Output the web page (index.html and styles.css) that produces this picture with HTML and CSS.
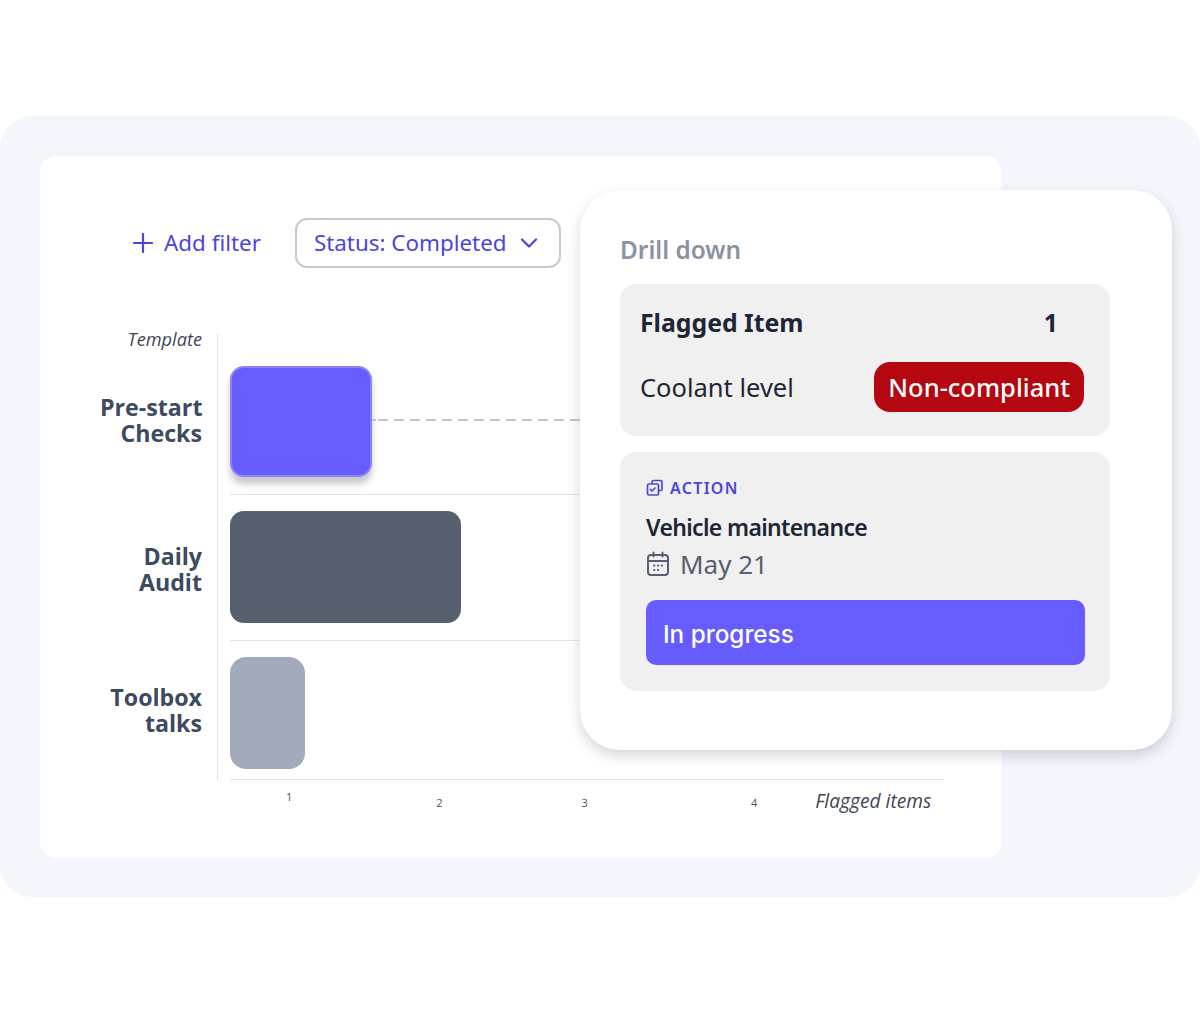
FILE: index.html
```html
<!DOCTYPE html>
<html lang="en">
<head>
    <meta charset="UTF-8">
    <meta name="viewport" content="width=device-width, initial-scale=1.0">
    <title>Flagged items report</title>
    <link rel="stylesheet" href="styles.css">
</head>
<body>
    <div class="panel">
        <div class="report">
            <div class="filters">
                <div class="add-filter">
                    <svg class="plus-icon" width="20" height="20" viewBox="0 0 20 20" fill="none" stroke="currentColor" stroke-width="2.200" stroke-linecap="round"><path d="M10 1v18M1 10h18"/></svg>
                    <span>Add filter</span>
                </div>
                <div class="status-select">
                    <span>Status: Completed</span>
                    <svg width="18" height="10" viewBox="0 0 18 10" fill="none" stroke="currentColor" stroke-width="2.200" stroke-linecap="round" stroke-linejoin="round"><path d="M2 1.500l7 7 7-7"/></svg>
                </div>
            </div>
            <div class="chart">
                <div class="labels">
                    <div class="axis-title">Template</div>
                    <div class="label label-first">Pre-start<br>Checks</div>
                    <div class="label label-second">Daily<br>Audit</div>
                    <div class="label label-third">Toolbox<br>talks</div>
                </div>
                <div class="plot">
                    <div class="row row-first">
                        <div class="bar bar-primary"></div>
                        <div class="dash"></div>
                    </div>
                    <div class="row row-second">
                        <div class="bar bar-dark"></div>
                    </div>
                    <div class="row row-third">
                        <div class="bar bar-light"></div>
                    </div>
                </div>
            </div>
            <div class="ticks">
                <span class="tick tick-1">1</span>
                <span class="tick tick-2">2</span>
                <span class="tick tick-3">3</span>
                <span class="tick tick-4">4</span>
                <span class="axis-title x-title">Flagged items</span>
            </div>
        </div>
        <div class="drill">
            <div class="drill-title">Drill down</div>
            <div class="box flagged">
                <div class="flagged-head">
                    <span>Flagged Item</span>
                    <span class="count">1</span>
                </div>
                <div class="flagged-row">
                    <span>Coolant level</span>
                    <span class="badge">Non-compliant</span>
                </div>
            </div>
            <div class="box action">
                <div class="action-tag">
                    <svg width="18" height="18" viewBox="0 0 18 18" fill="none" stroke="currentColor" stroke-width="1.700" stroke-linecap="round" stroke-linejoin="round"><path d="M6 4V3a1.500 1.500 0 0 1 1.500-1.500h7A1.500 1.500 0 0 1 16 3v7a1.500 1.500 0 0 1-1.500 1.500H13"/><rect x="1.500" y="5" width="11" height="11" rx="1.500"/><path d="M4.500 10.500l1.500 1.500 3-3"/></svg>
                    <span>ACTION</span>
                </div>
                <div class="action-name">Vehicle maintenance</div>
                <div class="action-date">
                    <svg width="24" height="26" viewBox="0 0 24 26" fill="none" stroke="currentColor" stroke-width="2" stroke-linecap="round"><rect x="2" y="4" width="20" height="20" rx="3"/><path d="M2 10h20M7.500 1.500v4M16.500 1.500v4"/><path d="M8 14.500h.5M11.800 14.500h.5M15.600 14.500h.5M8 19h.5M11.800 19h.5" stroke-width="1.800"/></svg>
                    <span>May 21</span>
                </div>
                <div class="progress">In progress</div>
            </div>
        </div>
    </div>
</body>
</html>
```

FILE: styles.css
```css
body {
    margin: 0;
    height: 1016px;
    padding-top: 116px;
    box-sizing: border-box;
    background-color: #fff;
    font-family: 'Noto Sans', sans-serif;
    overflow: hidden;
}
.panel {
    position: relative;
    height: 781px;
    box-sizing: border-box;
    padding: 40px 198px 39px 40px;
    background-color: #f3f6fb;
    border-radius: 32px;
}
.report {
    height: 702px;
    box-sizing: border-box;
    padding: 62px 58px 0 60px;
    background-color: #fff;
    border-radius: 16px;
}
.filters {
    display: flex;
    align-items: center;
    height: 50px;
    color: #4b45dc;
    font-size: 22.400px;
    line-height: 48px;
}
.add-filter {
    display: flex;
    align-items: center;
    gap: 11px;
    margin-left: 33px;
}
.status-select {
    display: flex;
    align-items: center;
    gap: 13px;
    height: 50px;
    width: 266px;
    box-sizing: border-box;
    margin-left: 34px;
    padding: 0 0 0 17px;
    border: 2px solid #c9cacf;
    border-radius: 12px;
}
.chart {
    display: flex;
    margin-top: 66px;
}
.labels {
    width: 118px;
    height: 446px;
    margin-right: -1px;
    text-align: right;
}
.axis-title {
    color: #3f4756;
    font-family: 'Open Sans', sans-serif;
    font-size: 18.200px;
    font-style: italic;
    line-height: 24px;
}
.labels .axis-title {
    margin-top: -7px;
    padding-right: 16px;
}
.label {
    padding-right: 16px;
    color: #3d4a60;
    font-family: 'Open Sans', sans-serif;
    font-size: 23.200px;
    font-weight: 700;
    line-height: 26px;
    white-space: nowrap;
}
.label-first {
    margin-top: 43px;
}
.label-second {
    margin-top: 97px;
}
.label-third {
    margin-top: 89px;
}
.plot {
    width: 727px;
    height: 446px;
    box-sizing: border-box;
    padding-left: 12px;
    border-left: 1px solid #e1e3e9;
}
.row {
    display: flex;
    align-items: center;
    box-sizing: border-box;
    border-bottom: 1px solid #e3e5ea;
}
.row-first {
    height: 161px;
    padding: 32px 0 18px;
}
.row-second {
    height: 146px;
    padding: 16px 0 17px;
}
.row-third {
    height: 139px;
    padding: 15px 0 10px;
}
.bar {
    height: 112px;
    flex: none;
    box-sizing: border-box;
    border-radius: 14px;
}
.bar-primary {
    width: 142px;
    height: 111px;
    background-color: #675cff;
    border: 2px solid #8a83f0;
    box-shadow: 0 7px 6px rgba(60, 60, 80, 0.28);
}
.bar-dark {
    width: 231px;
    background-color: #56606f;
}
.bar-light {
    width: 75px;
    background-color: #a2abbb;
    border-radius: 16px;
}
.dash {
    flex: 1;
    height: 2px;
    margin-top: -3px;
    background-image: repeating-linear-gradient(to right, #c4c5cb 0, #c4c5cb 10px, transparent 10px, transparent 16px);
    background-position: 6px 0;
}
.ticks {
    display: flex;
    align-items: flex-start;
    padding-left: 130px;
    height: 40px;
    color: #4a5160;
    font-family: 'Open Sans', sans-serif;
    font-size: 11px;
    line-height: 16px;
}
.tick-1 {
    margin-top: 9px;
    margin-left: 56px;
}
.tick-2 {
    margin-top: 15px;
    margin-left: 144px;
}
.tick-3 {
    margin-top: 15px;
    margin-left: 139px;
}
.tick-4 {
    margin-top: 15px;
    margin-left: 163px;
}
.x-title {
    margin-top: 9px;
    margin-left: 58px;
    font-size: 19.200px;
    white-space: nowrap;
}
.drill {
    position: absolute;
    top: 74px;
    left: 580px;
    width: 592px;
    height: 560px;
    box-sizing: border-box;
    padding: 43px 62px 0 40px;
    background-color: #fff;
    border-radius: 40px;
    box-shadow: 0 6px 14px rgba(50, 55, 80, 0.2);
}
.drill-title {
    color: #8b93a3;
    font-size: 24.400px;
    font-weight: 600;
    line-height: 34px;
}
.box {
    background-color: #f0f0f0;
    border-radius: 16px;
}
.flagged {
    height: 152px;
    box-sizing: border-box;
    margin-top: 17px;
    padding: 21px 26px 0 20px;
    color: #1e2636;
}
.flagged-head {
    display: flex;
    justify-content: space-between;
    padding-right: 26px;
    font-size: 24.800px;
    font-weight: 700;
    line-height: 34px;
}
.flagged-row {
    display: flex;
    justify-content: space-between;
    align-items: center;
    margin-top: 23px;
    font-size: 25.500px;
}
.badge {
    height: 50px;
    padding: 0 14px;
    color: #fff;
    background-color: #b5070f;
    border-radius: 16px;
    font-weight: 500;
    line-height: 50px;
}
.action {
    height: 239px;
    box-sizing: border-box;
    margin-top: 16px;
    padding: 25px 25px 0 26px;
}
.action-tag {
    display: flex;
    align-items: center;
    gap: 6px;
    color: #4b45dc;
    font-size: 16px;
    font-weight: 600;
    letter-spacing: 1.300px;
    line-height: 22px;
}
.action-name {
    margin-top: 12px;
    color: #1e2636;
    font-size: 23px;
    font-weight: 600;
    letter-spacing: -0.650px;
    line-height: 32px;
}
.action-date {
    display: flex;
    align-items: center;
    gap: 10px;
    margin-top: 2px;
    color: #56606f;
    font-size: 26px;
    line-height: 38px;
}
.progress {
    height: 65px;
    margin-top: 17px;
    padding-left: 17px;
    color: #fff;
    background-color: #675cff;
    border-radius: 10px;
    font-family: 'Inter', sans-serif;
    font-size: 24.300px;
    font-weight: 500;
    line-height: 68px;
}
```
